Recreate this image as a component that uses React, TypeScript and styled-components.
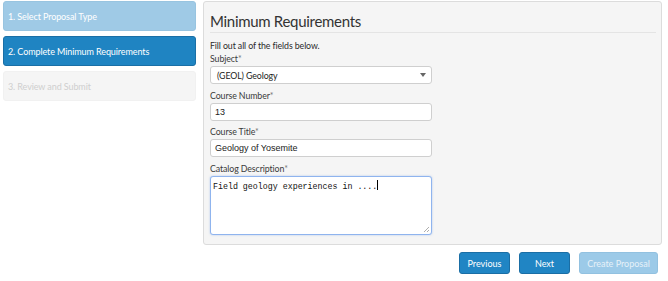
import React from "react";
import styled, { createGlobalStyle } from "styled-components";

const Global = createGlobalStyle`
  html, body { margin: 0; padding: 0; background: #fff; }
  body { font-family: Lato, "Open Sans", sans-serif; color: #333; }
  * { box-sizing: border-box; }
`;

const Page = styled.div`
  width: 668px;
  height: 281px;
  display: flex;
  gap: 7px;
  padding: 1px 6px 0 3px;
`;

const Sidebar = styled.div`
  width: 193px;
  display: flex;
  flex-direction: column;
  gap: 5px;
`;

const Step = styled.div<{ $state: "done" | "active" | "todo" }>`
  height: 30px;
  border-radius: 3px;
  padding: 0 4px;
  display: flex;
  align-items: center;
  font-size: 9px;
  letter-spacing: -0.1px;
  background: ${(p) =>
    p.$state === "done" ? "#9fcae6" : p.$state === "active" ? "#1f84c2" : "#f5f5f5"};
  color: ${(p) => (p.$state === "todo" ? "#cfcfcf" : "#fff")};
  border: 1px solid
    ${(p) => (p.$state === "done" ? "#98c4e0" : p.$state === "active" ? "#1a6fa6" : "#f1f1f1")};
`;

const Main = styled.div`
  flex: 1;
  display: flex;
  flex-direction: column;
`;

const Panel = styled.div`
  height: 244px;
  background: #f5f5f5;
  border: 1px solid #dcdcdc;
  border-radius: 3px;
  padding: 10px 5px 0 6px;
`;

const Title = styled.h2`
  margin: 0;
  font-weight: 400;
  font-size: 15px;
  letter-spacing: -0.3px;
  color: #333;
  line-height: 18px;
  padding-bottom: 2px;
  border-bottom: 1px solid #e4e4e4;
`;

const Intro = styled.p`
  margin: 6px 0 0;
  font-size: 8.8px;
  letter-spacing: -0.1px;
  line-height: 13px;
  color: #2a2a2a;
`;

const Field = styled.div`
  display: flex;
  flex-direction: column;
  width: 222px;
  margin-bottom: 4.5px;
`;

const Label = styled.label`
  font-size: 8.8px;
  letter-spacing: -0.1px;
  line-height: 13px;
  color: #3a3a3a;
  margin-bottom: 1px;
`;

const Req = styled.span`
  color: #777;
`;

const Box = styled.div<{ $focus?: boolean; $tall?: boolean; $select?: boolean }>`
  position: relative;
  height: ${(p) => (p.$tall ? "59px" : "18px")};
  background: #fff;
  border: 1px solid ${(p) => (p.$focus ? "#8fb4ee" : "#cfcfcf")};
  box-shadow: ${(p) => (p.$focus ? "0 0 2px rgba(100,150,230,0.5)" : "none")};
  border-radius: 3px;
  display: flex;
  align-items: ${(p) => (p.$tall ? "flex-start" : "center")};
  padding: ${(p) => (p.$tall ? "3px 2px" : p.$select ? "0 6px" : "0 4px")};
  font-size: 8.8px;
  letter-spacing: -0.1px;
  color: #222;
`;

const Plain = styled.span`
  font-family: "Liberation Sans", Arial, sans-serif;
  font-size: 9px;
  letter-spacing: 0;
`;

const Mono = styled.span`
  font-family: "Liberation Mono", "DejaVu Sans Mono", monospace;
  font-size: 8.3px;
  letter-spacing: 0;
  color: #111;
  line-height: 12px;
`;

const Caret = styled.span`
  display: inline-block;
  width: 1px;
  height: 10px;
  background: #000;
  vertical-align: -1px;
`;

const Arrow = styled.span`
  position: absolute;
  right: 5px;
  top: 6px;
  width: 0;
  height: 0;
  border-left: 3px solid transparent;
  border-right: 3px solid transparent;
  border-top: 4px solid #666;
`;

const Grip = styled.svg`
  position: absolute;
  right: 1px;
  bottom: 1px;
`;

const Buttons = styled.div`
  display: flex;
  justify-content: flex-end;
  gap: 9px;
  padding: 7px 4px 0 0;
`;

const Btn = styled.button<{ $disabled?: boolean }>`
  height: 22px;
  padding: 0;
  width: ${(p) => (p.$disabled ? "79px" : "51px")};
  border-radius: 3px;
  border: 1px solid ${(p) => (p.$disabled ? "#92c1e0" : "#1a6ea5")};
  background: ${(p) => (p.$disabled ? "#9ccae8" : "#2085c4")};
  color: ${(p) => (p.$disabled ? "#e6f1f8" : "#fff")};
  font-family: Lato, "Open Sans", sans-serif;
  font-size: 9px;
`;

export default function App() {
  return (
    <>
      <Global />
      <Page>
        <Sidebar>
          <Step $state="done">1. Select Proposal Type</Step>
          <Step $state="active">2. Complete Minimum Requirements</Step>
          <Step $state="todo">3. Review and Submit</Step>
        </Sidebar>
        <Main>
          <Panel>
            <Title>Minimum Requirements</Title>
            <Intro>Fill out all of the fields below.</Intro>
            <Field>
              <Label>
                Subject<Req>*</Req>
              </Label>
              <Box $select>
                <span>(GEOL) Geology</span>
                <Arrow />
              </Box>
            </Field>
            <Field>
              <Label>
                Course Number<Req>*</Req>
              </Label>
              <Box>
                <Plain>13</Plain>
              </Box>
            </Field>
            <Field>
              <Label>
                Course Title<Req>*</Req>
              </Label>
              <Box>
                <Plain>Geology of Yosemite</Plain>
              </Box>
            </Field>
            <Field>
              <Label>
                Catalog Description<Req>*</Req>
              </Label>
              <Box $focus $tall>
                <Mono>
                  Field geology experiences in ....
                  <Caret />
                </Mono>
                <Grip width="7" height="7" viewBox="0 0 7 7">
                  <path d="M6 1 L1 6 M6 4 L4 6" stroke="#999" strokeWidth="0.8" />
                </Grip>
              </Box>
            </Field>
          </Panel>
          <Buttons>
            <Btn>Previous</Btn>
            <Btn>Next</Btn>
            <Btn $disabled>Create Proposal</Btn>
          </Buttons>
        </Main>
      </Page>
    </>
  );
}
